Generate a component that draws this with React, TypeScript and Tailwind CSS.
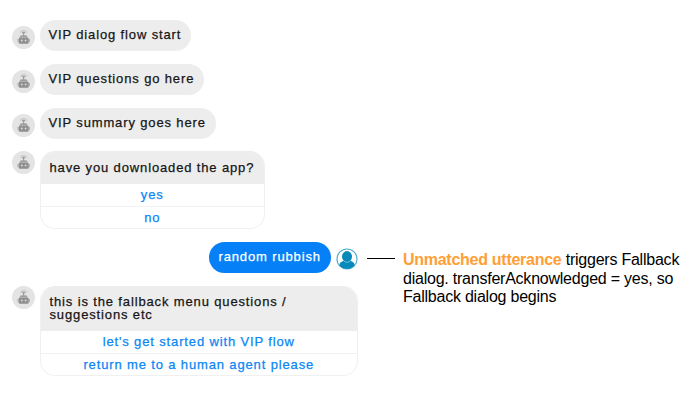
import React from "react";

function BotAvatar({ className = "" }: { className?: string }) {
  return (
    <div className={`h-[23px] w-[23px] shrink-0 rounded-full bg-[#e4e4e4] ${className}`}>
      <svg viewBox="0 0 23 23" className="h-full w-full" fill="none">
        <path d="M8.2 6.4Q11.6 2.8 15 6.4" stroke="#bcbcbc" strokeWidth="1" />
        <path d="M10 7.2Q11.6 5.4 13.2 7.2M11.6 6.8V10" stroke="#9c9c9c" strokeWidth="1.1" />
        <path d="M7.6 11.2Q8 9.3 9.6 9.3H13.6Q15.2 9.3 15.6 11.2Z" fill="#a0a0a0" />
        <rect x="6.7" y="11.6" width="10" height="6.1" rx="1.3" fill="#8e8e8e" />
        <path d="M6 13V16.1M17.4 13V16.1" stroke="#a8a8a8" strokeWidth="1" />
        <circle cx="9.8" cy="14.5" r="1.05" fill="#d4d4d4" />
        <circle cx="13.6" cy="14.5" r="1.05" fill="#d4d4d4" />
      </svg>
    </div>
  );
}

function UserAvatar() {
  return (
    <svg viewBox="0 0 22 22" className="mt-[6px] ml-[5px] h-[22px] w-[22px] shrink-0">
      <circle cx="11" cy="11" r="10" fill="#fff" stroke="#53aeca" strokeWidth="1.2" />
      <path d="M3.4 17.6C3.4 14.5 5.8 13.2 8.4 12.8H13.6C16.2 13.2 18.6 14.5 18.6 17.6Q15.5 21 11 21T3.4 17.6Z" fill="#0789b9" />
      <ellipse cx="11" cy="8.6" rx="5" ry="5.5" fill="#0789b9" />
      <path d="M7.4 12.6Q11 16 14.6 12.6" fill="none" stroke="#b8dfeb" strokeWidth=".6" />
    </svg>
  );
}

function Bubble({ text, width }: { text: string; width: string }) {
  return (
    <div className="flex h-[31px]">
      <BotAvatar className="mt-[6px]" />
      <div className={`ml-[4.5px] h-[31px] rounded-full bg-[#ededed] pl-[9px] leading-[30px] ${width}`}>{text}</div>
    </div>
  );
}

function MenuCard({ question, options, width, header }: { question: React.ReactNode; options: string[]; width: string; header: string }) {
  return (
    <div className="flex">
      <BotAvatar />
      <div className={`ml-[4.5px] overflow-hidden rounded-[15px] border border-[#f0f0f0] border-t-[#ededed] bg-white ${width}`}>
        <div className={`bg-[#ededed] pl-[9px] ${header}`}>{question}</div>
        {options.map((o, i) => (
          <div key={o} className={`text-center text-[#0b86f5] ${i > 0 ? "h-[22.5px] border-t border-[#f2f2f2] leading-[22px]" : "h-[21.5px] leading-[22px]"}`}>
            {o}
          </div>
        ))}
      </div>
    </div>
  );
}

export default function App() {
  return (
    <main className="h-[405px] w-[691px] overflow-hidden bg-white pt-[20px] pl-[12px] font-['Liberation_Sans',Arial,sans-serif] text-[13px] tracking-[0.86px] whitespace-nowrap text-[#161616] [-webkit-text-stroke:0.25px]">
      <div className="flex flex-col gap-[13px]">
        <Bubble text="VIP dialog flow start" width="w-[151.5px]" />
        <Bubble text="VIP questions go here" width="w-[164px]" />
        <Bubble text="VIP summary goes here" width="w-[176px]" />
      </div>
      <div className="mt-[12px] h-[78px]">
        <MenuCard question="have you downloaded the app?" options={["yes", "no"]} width="w-[225.5px]" header="h-[32px] leading-[31px]" />
      </div>
      <div className="mt-[13px] flex h-[31px] items-start pl-[197px]">
        <div className="h-[31px] w-[121.5px] rounded-full bg-[#0580f7] pl-[9.5px] leading-[30px] text-white">random rubbish</div>
        <UserAvatar />
        <div className="mt-[16px] ml-[9.5px] h-px w-[28px] bg-black" />
        <p className="mt-[9px] ml-[8px] text-[16px] leading-[18.5px] tracking-[-0.23px] text-black [-webkit-text-stroke:0]">
          <b className="tracking-[-0.27px] text-[#ff9e35]">Unmatched utterance</b> triggers Fallback
          <br />
          dialog. transferAcknowledged = yes, so
          <br />
          Fallback dialog begins
        </p>
      </div>
      <div className="mt-[13px]">
        <MenuCard
          question={<><div>this is the fallback menu questions /</div><div>suggestions etc</div></>}
          options={["let's get started with VIP flow", "return me to a human agent please"]}
          width="w-[318.5px]"
          header="h-[44px] pt-[8px] leading-[13px]"
        />
      </div>
    </main>
  );
}
